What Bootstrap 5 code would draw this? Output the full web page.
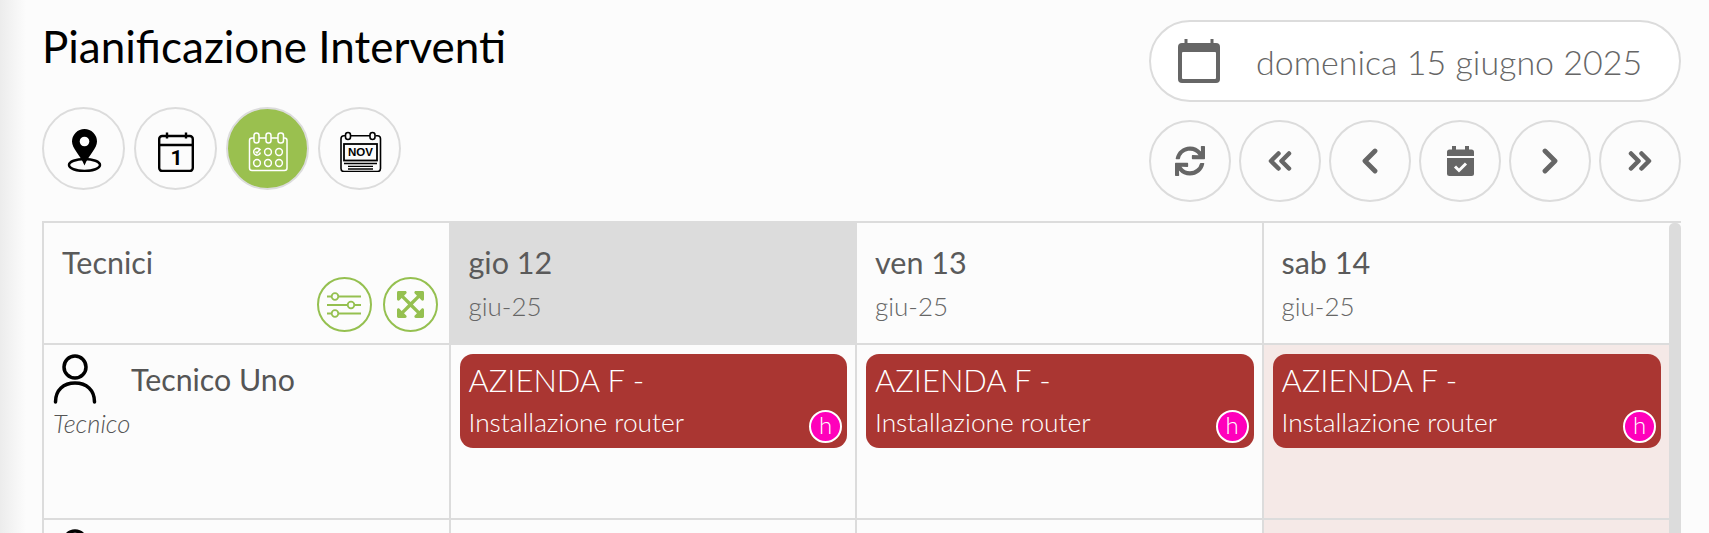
<!DOCTYPE html>
<html lang="it">
<head>
  <meta charset="UTF-8" />
  <meta name="viewport" content="width=device-width, initial-scale=1.0"/>
  <title>Pianificazione Interventi</title>
  <link href="https://cdn.jsdelivr.net/npm/bootstrap@5.3.3/dist/css/bootstrap.min.css" rel="stylesheet"/>
  <style>
    html, body { height: 100%; overflow: hidden; }
    body {
      font-family: "Lato", sans-serif;
      background: linear-gradient(to right, #ececec, #fcfcfc 26px);
      color: #555;
    }
    .page-wrap { padding: 0 28px 0 42px; }
    .page-head { height: 221px; }
    .page-title { font-size: 44px; font-weight: 400; color: #000; line-height: 1.2; margin: 20px 0 0; }
    .view-btns { gap: 9px; margin-top: 34px; }
    .round-btn {
      width: 82px; height: 82px; padding: 0;
      border: 2px solid #dcdcdc; border-radius: 50%;
      background: #fcfcfc;
      display: flex; align-items: center; justify-content: center;
    }
    .view-btns .round-btn { width: 83px; height: 83px; }
    .round-btn.is-on { background: #9ac04f; }
    .date-pill {
      width: 532px; height: 82px; margin-top: 20px;
      border: 2px solid #dcdcdc; border-radius: 41px;
      background: #fff;
      font-size: 34px; font-weight: 300; color: #666;
      padding-left: 26px; gap: 35px;
    }
    .date-text { margin-top: 0; }
    .nav-btns { margin-top: 18px; }
    .grid-wrap { border-top: 2px solid #dcdcdc; height: 312px; overflow: hidden; }
    .grid-scroll { width: 12px; flex: none; background: #dcdcdc; border-radius: 5px 5px 0 0; height: 400px; }
    .plan-table { table-layout: fixed; width: 100%; border-collapse: collapse; margin: 0; }
    .plan-table th, .plan-table td {
      border: solid #dcdcdc; border-width: 0 0 2px 2px;
      padding: 0; vertical-align: top; font-weight: 400;
    }
    .plan-table tr.head-row > th { height: 121px; padding: 17px 17px 0 18px; }
    .plan-table tr.body-row > td { height: 175px; padding: 9px 8px 0 9px; }
    .day-name { font-size: 30.500px; color: #5a5a5a; line-height: 44px; }
    .day-sub { font-size: 26px; font-weight: 300; color: #666; line-height: 32px; margin-top: 6px; }
    .day-today { background: #dcdcdc; }
    .day-off { background: #f5e9e7; }
    .tech-head { position: relative; }
    .tech-tools { position: absolute; right: 11px; bottom: 11px; gap: 11px; }
    .tool-btn {
      width: 55px; height: 55px; padding: 0;
      border: 2px solid #95c050; border-radius: 50%;
      background: transparent;
      display: flex; align-items: center; justify-content: center;
    }
    .tech-name { font-size: 30.300px; line-height: 40px; margin-left: 34px; margin-top: 5px; color: #555; }
    .tech-role { font-size: 25.500px; font-weight: 300; font-style: italic; color: #555; line-height: 30px; margin-top: 4px; }
    .task-card {
      position: relative;
      height: 94px; border-radius: 13px;
      background: #aa3632; color: #fff;
      padding: 4px 9px 0;
    }
    .task-client { font-size: 31px; font-weight: 300; line-height: 44px; }
    .task-desc { font-size: 26.300px; font-weight: 300; line-height: 41px; }
    .task-badge {
      position: absolute; right: 5px; bottom: 5px;
      width: 33px; height: 33px;
      border: 2px solid #fff; border-radius: 50%;
      background: #ff00bb; color: #fff;
      font-size: 24px; font-weight: 300; line-height: 26px; text-align: center;
    }
  </style>
</head>

<body>
  <div class="page-wrap">

    <!-- Header -->
    <div class="page-head d-flex justify-content-between">
      <div>
        <h1 class="page-title">Pianificazione Interventi</h1>
        <div class="view-btns d-flex">
          <button class="round-btn" type="button" aria-label="Mappa">
            <svg width="48" height="48" viewBox="0 0 48 48"><ellipse cx="24.500" cy="41" rx="15.500" ry="6" fill="none" stroke="#000" stroke-width="2.500"/><path d="M24.500 5a12.500 12.500 0 0 0-12.500 12.500c0 7 8 13 12.500 24 4.500-11 12.500-17 12.500-24A12.500 12.500 0 0 0 24.500 5z" fill="#000"/><circle cx="24.500" cy="17.500" r="4.800" fill="#fff"/></svg>
          </button>
          <button class="round-btn" type="button" aria-label="Giorno">
            <svg width="48" height="48" viewBox="0 0 48 48" fill="none" stroke="#000" stroke-width="2.400"><rect x="7.200" y="12" width="33.600" height="35" rx="3"/><path d="M7 21h34M15 8.500v6M34 8.500v6"/><text x="24.500" y="41" text-anchor="middle" font-family="Roboto, sans-serif" font-size="21" font-weight="700" fill="#000" stroke="none">1</text></svg>
          </button>
          <button class="round-btn is-on" type="button" aria-label="Settimana">
            <svg width="48" height="48" viewBox="0 0 48 48" fill="none" stroke="#fff" stroke-width="1.500"><path d="M10 14H8a2.500 2.500 0 0 0-2.500 2.500v27.500a2.500 2.500 0 0 0 2.500 2.500h32.500a2.500 2.500 0 0 0 2.500-2.500V16.500a2.500 2.500 0 0 0-2.500-2.500H40M15 14h7M27 14h7"/><rect x="10" y="9" width="5" height="10" rx="2.500"/><rect x="22" y="9" width="5" height="10" rx="2.500"/><rect x="34" y="9" width="5.500" height="10" rx="2.500"/><path d="M16 26a3.400 3.400 0 1 0 .4 2.500"/><path d="M11.500 27.500l1.500 1.500 3.500-4"/><circle cx="24" cy="28" r="3.400"/><circle cx="35" cy="28" r="3.400"/><circle cx="13" cy="39" r="3.400"/><circle cx="24" cy="39" r="3.400"/><circle cx="35" cy="39" r="3.400"/></svg>
          </button>
          <button class="round-btn" type="button" aria-label="Mese">
            <svg width="48" height="48" viewBox="0 0 48 48" fill="none" stroke="#000" stroke-width="1.600"><path d="M9.500 11.700H8a3 3 0 0 0-3 3V44.500a3 3 0 0 0 3 3h33.500a3 3 0 0 0 3-3V14.700a3 3 0 0 0-3-3H39.500M14.500 11.700h19.500"/><rect x="9.500" y="8.500" width="5" height="7" rx="2.500"/><rect x="34" y="8.500" width="5" height="7" rx="2.500"/><rect x="8" y="20" width="33" height="16.500" stroke-width="1.800"/><path d="M8 39.500h33M12 42.300h25M12 45h25" stroke-width="1.300"/><text x="24.500" y="32.300" text-anchor="middle" font-family="Liberation Sans, sans-serif" font-size="11.500" font-weight="700" fill="#000" stroke="none">NOV</text></svg>
          </button>
        </div>
      </div>
      <div>
        <div class="date-pill d-flex align-items-center">
          <svg width="44" height="44" viewBox="0 0 44 44"><path d="M5 4h34a4 4 0 0 1 4 4v32a4 4 0 0 1-4 4H5a4 4 0 0 1-4-4V8a4 4 0 0 1 4-4z" fill="#666"/><rect x="5" y="13" width="34" height="27" rx="1" fill="#fff"/><path d="M9 0v5M35 0v5" stroke="#666" stroke-width="3"/></svg>
          <span class="date-text">domenica 15 giugno 2025</span>
        </div>
        <div class="nav-btns d-flex justify-content-between">
          <button class="round-btn" type="button" aria-label="Aggiorna">
            <svg width="30" height="30" viewBox="0 0 512 512" fill="#666"><path d="M440.65 12.57l4 82.77A247.16 247.16 0 0 0 255.83 8C134.73 8 33.91 94.92 12.29 209.82A12 12 0 0 0 24.09 224h49.05a12 12 0 0 0 11.67-9.26 175.91 175.91 0 0 1 317-56.94l-101.46-4.86a12 12 0 0 0-12.57 12v47.41a12 12 0 0 0 12 12H500a12 12 0 0 0 12-12V12a12 12 0 0 0-12-12h-47.37a12 12 0 0 0-11.98 12.57zM255.83 432a175.61 175.61 0 0 1-146-77.8l101.8 4.87a12 12 0 0 0 12.57-12v-47.4a12 12 0 0 0-12-12H12a12 12 0 0 0-12 12V500a12 12 0 0 0 12 12h47.35a12 12 0 0 0 12-12.6l-4.15-82.57A247.17 247.17 0 0 0 255.83 504c121.11 0 221.93-86.92 243.55-201.82a12 12 0 0 0-11.8-14.18h-49.05a12 12 0 0 0-11.67 9.26A175.86 175.86 0 0 1 255.83 432z"/></svg>
          </button>
          <button class="round-btn" type="button" aria-label="Indietro veloce">
            <svg width="24" height="20" viewBox="0 0 24 20" fill="none" stroke="#666" stroke-width="4.500" stroke-linecap="round" stroke-linejoin="round"><path d="M10.500 2.500L3 10l7.500 7.500M21 2.500L13.500 10l7.500 7.500"/></svg>
          </button>
          <button class="round-btn" type="button" aria-label="Indietro">
            <svg width="16" height="26" viewBox="0 0 16 26" fill="none" stroke="#666" stroke-width="4.800" stroke-linecap="round" stroke-linejoin="round"><path d="M13 3L3 13l10 10"/></svg>
          </button>
          <button class="round-btn" type="button" aria-label="Oggi">
            <svg width="27" height="30" viewBox="0 0 27 30"><path d="M0 10V6a2.500 2.500 0 0 1 2.500-2.500H5V0h4v3.500h9V0h4v3.500h2.500A2.500 2.500 0 0 1 27 6v4z" fill="#666"/><path d="M0 12h27v15.500a2.500 2.500 0 0 1-2.500 2.500h-22A2.500 2.500 0 0 1 0 27.500z" fill="#666"/><path d="M8 20.500l4 4 7-7" fill="none" stroke="#fcfcfc" stroke-width="3"/></svg>
          </button>
          <button class="round-btn" type="button" aria-label="Avanti">
            <svg width="16" height="26" viewBox="0 0 16 26" fill="none" stroke="#666" stroke-width="4.800" stroke-linecap="round" stroke-linejoin="round"><path d="M3 3l10 10L3 23"/></svg>
          </button>
          <button class="round-btn" type="button" aria-label="Avanti veloce">
            <svg width="24" height="20" viewBox="0 0 24 20" fill="none" stroke="#666" stroke-width="4.500" stroke-linecap="round" stroke-linejoin="round"><path d="M3 2.500L10.500 10 3 17.500M13.500 2.500L21 10l-7.500 7.500"/></svg>
          </button>
        </div>
      </div>
    </div>

    <!-- Planner -->
    <div class="grid-wrap d-flex align-items-start">
      <div class="flex-grow-1">
        <table class="plan-table">
          <thead>
            <tr class="head-row">
              <th class="tech-head">
                <div class="day-name">Tecnici</div>
                <div class="tech-tools d-flex">
                  <button class="tool-btn" type="button" aria-label="Filtri">
                    <svg width="36" height="30" viewBox="0 0 36 30" fill="none" stroke="#95c050" stroke-width="1.800"><path d="M1 6.500h34M1 15h34M1 23.500h34"/><circle cx="9" cy="6.500" r="3.300" fill="#fcfcfc"/><circle cx="25" cy="15" r="3.300" fill="#fcfcfc"/><circle cx="9" cy="23.500" r="3.300" fill="#fcfcfc"/></svg>
                  </button>
                  <button class="tool-btn" type="button" aria-label="Espandi">
                    <svg width="27" height="27" viewBox="0 32 448 448" fill="#95c050"><path d="M448 344v112a23.940 23.940 0 0 1-24 24H312c-21.390 0-32.090-25.900-17-41l36.200-36.200L224 295.600 116.770 402.900 153 439c15.090 15.100 4.390 41-17 41H24a23.940 23.940 0 0 1-24-24V344c0-21.400 25.890-32.100 41-17l36.190 36.200L184.460 256 77.180 148.700 41 185c-15.100 15.100-41 4.400-41-17V56a23.940 23.940 0 0 1 24-24h112c21.390 0 32.090 25.900 17 41l-36.200 36.200L224 216.400l107.230-107.300L295 73c-15.090-15.100-4.390-41 17-41h112a23.940 23.940 0 0 1 24 24v112c0 21.400-25.890 32.100-41 17l-36.190-36.200L263.540 256l107.280 107.300L407 327.100c15.100-15.200 41-4.500 41 16.900z"/></svg>
                  </button>
                </div>
              </th>
              <th class="day-today"><div class="day-name">gio 12</div><div class="day-sub">giu-25</div></th>
              <th><div class="day-name">ven 13</div><div class="day-sub">giu-25</div></th>
              <th><div class="day-name">sab 14</div><div class="day-sub">giu-25</div></th>
            </tr>
          </thead>
          <tbody>
            <tr class="body-row">
              <td>
                <div class="d-flex">
                  <svg width="44" height="50" viewBox="0 0 44 50" fill="none" stroke="#000" stroke-width="3.500"><circle cx="22" cy="13" r="11"/><path d="M2.500 48c0-12 8-19 19.500-19s19.500 7 19.500 19" stroke-linecap="round"/></svg>
                  <div class="tech-name">Tecnico Uno</div>
                </div>
                <div class="tech-role">Tecnico</div>
              </td>
              <td>
                <div class="task-card">
                  <div class="task-client">AZIENDA F -</div>
                  <div class="task-desc">Installazione router</div>
                  <span class="task-badge">h</span>
                </div>
              </td>
              <td>
                <div class="task-card">
                  <div class="task-client">AZIENDA F -</div>
                  <div class="task-desc">Installazione router</div>
                  <span class="task-badge">h</span>
                </div>
              </td>
              <td class="day-off">
                <div class="task-card">
                  <div class="task-client">AZIENDA F -</div>
                  <div class="task-desc">Installazione router</div>
                  <span class="task-badge">h</span>
                </div>
              </td>
            </tr>
            <tr class="body-row">
              <td>
                <svg width="44" height="50" viewBox="0 0 44 50" fill="none" stroke="#000" stroke-width="3.500"><circle cx="22" cy="13" r="11"/><path d="M2.500 48c0-12 8-19 19.500-19s19.500 7 19.500 19" stroke-linecap="round"/></svg>
              </td>
              <td></td>
              <td></td>
              <td class="day-off"></td>
            </tr>
          </tbody>
        </table>
      </div>
      <div class="grid-scroll"></div>
    </div>

  </div>

  <script src="https://cdn.jsdelivr.net/npm/bootstrap@5.3.3/dist/js/bootstrap.bundle.min.js"></script>
</body>
</html>
